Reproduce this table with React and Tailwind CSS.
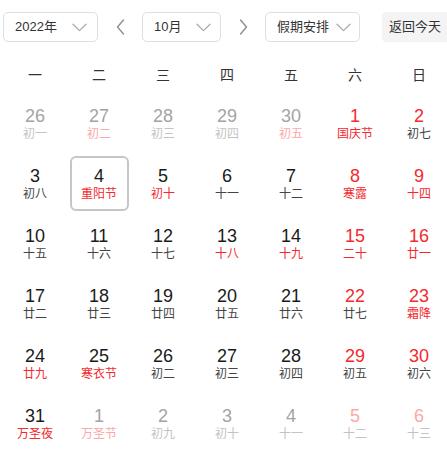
import React from "react";

const FONT = { fontFamily: '"Liberation Sans", "Noto Sans CJK SC", sans-serif' };

const Chevron = () => (
  <svg width="15" height="9" viewBox="0 0 15 9" fill="none" className="shrink-0">
    <path d="M1 1.2 L7.5 7.6 L14 1.2" stroke="#a8abb2" strokeWidth="1.3" strokeLinecap="round" strokeLinejoin="round" />
  </svg>
);

const Arrow = ({ dir }) => (
  <svg width="9" height="16" viewBox="0 0 9 16" fill="none">
    {dir === "left" ? (
      <path d="M7.5 1 L1.5 8 L7.5 15" stroke="#8c8f96" strokeWidth="1.4" strokeLinecap="round" strokeLinejoin="round" />
    ) : (
      <path d="M1.5 1 L7.5 8 L1.5 15" stroke="#8c8f96" strokeWidth="1.4" strokeLinecap="round" strokeLinejoin="round" />
    )}
  </svg>
);

const Select = ({ label, w, chevronPad }) => (
  <div
    className={`flex h-[30px] shrink-0 items-center justify-between rounded-[5px] border border-[#dcdfe6] bg-white pl-[11px] text-[13px] text-[#333] ${w} ${chevronPad}`}
  >
    <span>{label}</span>
    <Chevron />
  </div>
);

const R = "#f5292d";
const PINK = "#fba8a8";
const GRAY_N = "#a3a3a3";
const GRAY_L = "#c3c3c3";
const DARK_N = "#1a1a1a";
const DARK_L = "#444";

// [number, lunar, numColor, lunarColor]
const days = [
  ["26", "初一", GRAY_N, GRAY_L],
  ["27", "初二", GRAY_N, PINK],
  ["28", "初三", GRAY_N, GRAY_L],
  ["29", "初四", GRAY_N, GRAY_L],
  ["30", "初五", GRAY_N, PINK],
  ["1", "国庆节", R, R],
  ["2", "初七", R, DARK_L],

  ["3", "初八", DARK_N, DARK_L],
  ["4", "重阳节", DARK_N, R, true],
  ["5", "初十", DARK_N, R],
  ["6", "十一", DARK_N, DARK_L],
  ["7", "十二", DARK_N, DARK_L],
  ["8", "寒露", R, R],
  ["9", "十四", R, R],

  ["10", "十五", DARK_N, DARK_L],
  ["11", "十六", DARK_N, DARK_L],
  ["12", "十七", DARK_N, DARK_L],
  ["13", "十八", DARK_N, R],
  ["14", "十九", DARK_N, R],
  ["15", "二十", R, R],
  ["16", "廿一", R, R],

  ["17", "廿二", DARK_N, DARK_L],
  ["18", "廿三", DARK_N, DARK_L],
  ["19", "廿四", DARK_N, DARK_L],
  ["20", "廿五", DARK_N, DARK_L],
  ["21", "廿六", DARK_N, DARK_L],
  ["22", "廿七", R, DARK_L],
  ["23", "霜降", R, R],

  ["24", "廿九", DARK_N, R],
  ["25", "寒衣节", DARK_N, R],
  ["26", "初二", DARK_N, DARK_L],
  ["27", "初三", DARK_N, DARK_L],
  ["28", "初四", DARK_N, DARK_L],
  ["29", "初五", R, DARK_L],
  ["30", "初六", R, DARK_L],

  ["31", "万圣夜", DARK_N, R],
  ["1", "万圣节", GRAY_N, PINK],
  ["2", "初九", GRAY_N, GRAY_L],
  ["3", "初十", GRAY_N, GRAY_L],
  ["4", "十一", GRAY_N, GRAY_L],
  ["5", "十二", PINK, GRAY_L],
  ["6", "十三", PINK, GRAY_L],
];

const weekdays = ["一", "二", "三", "四", "五", "六", "日"];

export default function App() {
  return (
    <div className="h-[453px] w-[447px] overflow-hidden bg-white" style={FONT}>
      <div className="flex items-center pl-[3px] pt-[12px]">
        <Select label="2022年" w="w-[95px]" chevronPad="pr-[10px]" />
        <div className="flex w-[44px] shrink-0 justify-center">
          <Arrow dir="left" />
        </div>
        <Select label="10月" w="w-[79px]" chevronPad="pr-[9px]" />
        <div className="flex w-[44px] shrink-0 justify-center">
          <Arrow dir="right" />
        </div>
        <Select label="假期安排" w="w-[95px]" chevronPad="pr-[8px]" />
        <div className="ml-[22px] flex h-[30px] w-[80px] shrink-0 items-center rounded-[4px] bg-[#f4f4f5] pl-[7px] text-[13px] text-[#333]">
          返回今天
        </div>
      </div>

      <div className="mt-[18px] grid h-[30px] grid-cols-[repeat(7,64px)] items-center pl-[3px] text-[14px] text-[#333]">
        {weekdays.map((d) => (
          <div key={d} className="text-center">
            {d}
          </div>
        ))}
      </div>

      <div className="mt-[6px] grid grid-cols-[repeat(7,64px)] gap-y-[5px] pl-[3px]">
        {days.map(([n, l, nc, lc, today], i) => (
          <div
            key={i}
            className={`flex h-[55px] w-[59px] flex-col items-center justify-center justify-self-center ${
              today ? "rounded-[6px] border-2 border-[#c4c6cc]" : ""
            }`}
          >
            <div className="text-[18px] leading-[20px]" style={{ color: nc }}>
              {n}
            </div>
            <div className="text-[12px] leading-[16px]" style={{ color: lc }}>
              {l}
            </div>
          </div>
        ))}
      </div>
    </div>
  );
}
